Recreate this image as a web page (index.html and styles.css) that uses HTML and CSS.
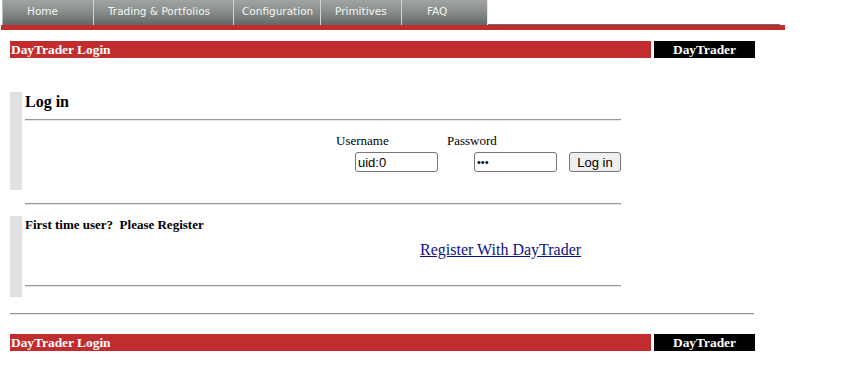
FILE: index.html
```html
<!DOCTYPE html>
<html>
<head>
<meta charset="utf-8">
<title>DayTrader Login</title>
<link rel="stylesheet" href="styles.css">
</head>
<body>
<nav class="topnav">
  <a class="tab tab-home" href="#">Home</a>
  <a class="tab tab-trading" href="#">Trading &amp; Portfolios</a>
  <a class="tab tab-config" href="#">Configuration</a>
  <a class="tab tab-prims" href="#">Primitives</a>
  <a class="tab tab-faq" href="#">FAQ</a>
  <div class="nav-fill"></div>
</nav>
<div class="nav-rule"></div>
<div class="page">
  <div class="banner banner-top">
    <div class="banner-title">DayTrader Login</div>
    <div class="banner-brand">DayTrader</div>
  </div>

  <div class="panel panel-login">
    <div class="panel-side"></div>
    <div class="panel-body">
      <h2 class="panel-heading">Log in</h2>
      <hr class="rule">
      <form class="login-form">
        <div class="form-labels">
          <span class="lbl lbl-user">Username</span>
          <span class="lbl">Password</span>
        </div>
        <div class="form-fields">
          <input class="field" type="text" value="uid:0">
          <input class="field field-pass" type="password" value="xxx">
          <button class="btn" type="button">Log in</button>
        </div>
      </form>
    </div>
  </div>
  <hr class="rule rule-indent">

  <div class="panel panel-register">
    <div class="panel-side"></div>
    <div class="panel-body">
      <div class="register-note">First time user?&nbsp; Please Register</div>
      <div class="register-link-row"><a class="register-link" href="#">Register With DayTrader</a></div>
      <hr class="rule rule-low">
    </div>
  </div>

  <hr class="rule rule-wide">

  <div class="banner banner-bottom">
    <div class="banner-title">DayTrader Login</div>
    <div class="banner-brand">DayTrader</div>
  </div>
</div>
</body>
</html>
```
FILE: styles.css
```css
html, body {
  margin: 0;
  padding: 0;
  background: #ffffff;
}
body {
  font-family: "Liberation Serif", "Times New Roman", serif;
  font-size: 13px;
  color: #000;
}

/* top navigation */
.topnav {
  display: flex;
  height: 25px;
  padding-left: 2px;
}
.tab {
  box-sizing: border-box;
  display: block;
  height: 25px;
  line-height: 23px;
  background: linear-gradient(#a1a4a2, #8a8f8c 45%, #5f6764);
  border-left: 1px solid #d3d5d4;
  color: #f1f3f2;
  font-family: "DejaVu Sans", Verdana, sans-serif;
  font-size: 10.5px;
  text-decoration: none;
  white-space: nowrap;
}
.tab-home { width: 91px; padding-left: 24px; border-left-color: #b9bcba; }
.tab-trading { width: 140px; padding-left: 14px; }
.tab-config { width: 87px; padding-left: 8px; }
.tab-prims { width: 81px; padding-left: 14px; }
.tab-faq { width: 87px; padding-left: 25px; border-right: 1px solid #e6e8e7; }
.nav-fill {
  box-sizing: border-box;
  width: 292px;
  height: 25px;
  border-bottom: 1px solid #69706d;
}
.nav-rule {
  margin-left: 1px;
  width: 784px;
  height: 5px;
  background: #c12d2e;
}

.page {
  padding-left: 10px;
}

/* banners */
.banner {
  display: flex;
  gap: 3px;
  width: 745px;
  height: 17px;
  line-height: 17px;
  font-weight: bold;
  font-size: 13.4px;
  color: #ffffff;
}
.banner-top { margin-top: 11px; }
.banner-bottom { margin-top: 19px; }
.banner-title {
  width: 641px;
  background: #c12d2e;
  padding-left: 1px;
  box-sizing: border-box;
}
.banner-brand {
  width: 101px;
  background: #000000;
  text-align: center;
}

/* panels */
.panel {
  display: flex;
  gap: 3px;
}
.panel-login { margin-top: 34px; height: 98px; }
.panel-register { margin-top: 11px; height: 81px; }
.panel-side {
  width: 12px;
  background: #e0dfe1;
}
.panel-body {
  width: 596px;
}
.panel-login .panel-body { padding-top: 1px; }
.panel-register .panel-body { padding-top: 1px; }

.panel-heading {
  margin: 0;
  font-size: 16px;
  line-height: 18px;
  font-weight: bold;
}

.rule {
  display: block;
  margin: 8px 0 0 0;
  height: 0;
  border: 0;
  border-top: 1px solid #979797;
  border-bottom: 1px solid #e6e6e6;
}
.rule-indent {
  margin: 13px 0 0 15px;
  width: 596px;
}
.rule-low { margin-top: 26px; }
.rule-wide {
  margin-top: 16px;
  width: 744px;
}

/* login form */
.login-form { margin: 0; }
.form-labels {
  display: flex;
  margin-top: 12px;
  padding-left: 311px;
  line-height: 15px;
  font-size: 13px;
}
.lbl-user { width: 111px; }
.form-fields {
  display: flex;
  margin-top: 4px;
  padding-left: 330px;
}
.field {
  box-sizing: border-box;
  width: 83px;
  height: 20px;
  margin: 0;
  padding: 1px 2px;
  border: 1px solid #767676;
  border-radius: 3px;
  font-family: "Liberation Sans", Arial, sans-serif;
  font-size: 13px;
  color: #000;
  background: #fff;
}
.field-pass { margin-left: 36px; font-size: 11px; }
.btn {
  box-sizing: border-box;
  width: 52px;
  height: 20px;
  margin: 0 0 0 12px;
  padding: 0;
  border: 1px solid #767676;
  border-radius: 3px;
  background: #efefef;
  font-family: "Liberation Sans", Arial, sans-serif;
  font-size: 13px;
  color: #000;
}

/* register */
.register-note {
  font-weight: bold;
  font-size: 13px;
  line-height: 15px;
}
.register-link-row {
  margin-top: 9px;
  padding-left: 395px;
  font-size: 16px;
  line-height: 18px;
}
.register-link {
  color: #10108c;
  text-decoration: underline;
}
```
